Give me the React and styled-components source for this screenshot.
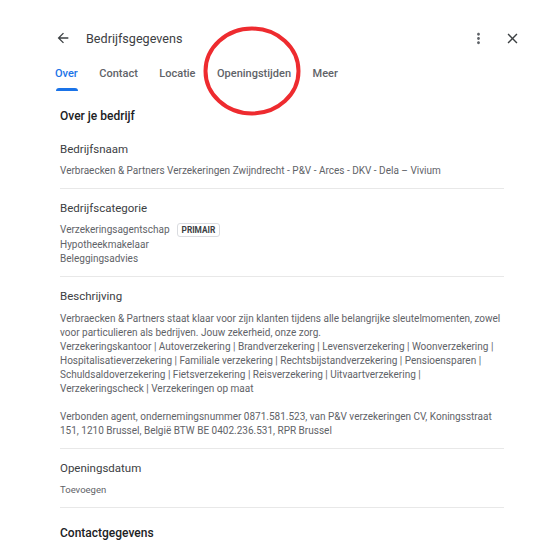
import React from 'react';
import styled, { createGlobalStyle } from 'styled-components';

const GlobalStyle = createGlobalStyle`
  html, body {
    margin: 0;
    padding: 0;
    background: #fff;
  }
  body {
    font-family: Roboto, "Noto Sans", Arial, sans-serif;
    -webkit-font-smoothing: antialiased;
  }
`;

const tabs = ['Over', 'Contact', 'Locatie', 'Openingstijden', 'Meer'];

// regels zoals ze in de kaart afbreken
const description = [
  'Verbraecken & Partners staat klaar voor zijn klanten tijdens alle belangrijke sleutelmomenten, zowel',
  'voor particulieren als bedrijven. Jouw zekerheid, onze zorg.',
  'Verzekeringskantoor | Autoverzekering | Brandverzekering | Levensverzekering | Woonverzekering |',
  'Hospitalisatieverzekering | Familiale verzekering | Rechtsbijstandverzekering | Pensioensparen |',
  'Schuldsaldoverzekering | Fietsverzekering | Reisverzekering | Uitvaartverzekering |',
  'Verzekeringscheck | Verzekeringen op maat',
  '',
  'Verbonden agent, ondernemingsnummer 0871.581.523, van P&V verzekeringen CV, Koningsstraat',
  '151, 1210 Brussel, België BTW BE 0402.236.531, RPR Brussel',
];

const Page = () => {
  return (
    <Panel>
      <GlobalStyle />
      <Header>
        <IconButton aria-label="terug">
          <svg width="16" height="16" viewBox="0 0 24 24">
            <path d="M20 11H7.83l5.59-5.59L12 4l-8 8 8 8 1.41-1.41L7.83 13H20v-2z" fill="#3c4043" />
          </svg>
        </IconButton>
        <Title>Bedrijfsgegevens</Title>
        <Spacer />
        <IconButton aria-label="meer">
          <svg width="17" height="17" viewBox="0 0 24 24">
            <path d="M12 8c1.1 0 2-.9 2-2s-.9-2-2-2-2 .9-2 2 .9 2 2 2zm0 2c-1.1 0-2 .9-2 2s.9 2 2 2 2-.9 2-2-.9-2-2-2zm0 6c-1.1 0-2 .9-2 2s.9 2 2 2 2-.9 2-2-.9-2-2-2z" fill="#5f6368" />
          </svg>
        </IconButton>
        <IconButton aria-label="sluiten" $gap>
          <svg width="17" height="17" viewBox="0 0 24 24">
            <path d="M19 6.41L17.59 5 12 10.59 6.41 5 5 6.41 10.59 12 5 17.59 6.41 19 12 13.41 17.59 19 19 17.59 13.41 12z" fill="#3c4043" />
          </svg>
        </IconButton>
      </Header>

      <TabBar>
        {tabs.map((t, i) => (
          <Tab key={t} $active={i === 0}>{t}</Tab>
        ))}
      </TabBar>

      <Content>
        <SectionTitle>Over je bedrijf</SectionTitle>

        <Block>
          <Label>Bedrijfsnaam</Label>
          <Value>Verbraecken &amp; Partners Verzekeringen Zwijndrecht - P&amp;V - Arces - DKV - Dela – Vivium</Value>
        </Block>

        <Block>
          <Label>Bedrijfscategorie</Label>
          <Lines>
            <Line>Verzekeringsagentschap<Chip>PRIMAIR</Chip></Line>
            <Line>Hypotheekmakelaar</Line>
            <Line>Beleggingsadvies</Line>
          </Lines>
        </Block>

        <Block $tall>
          <Label>Beschrijving</Label>
          <Description>
            {description.map((l, i) => (
              <DescLine key={i}>{l || '\u00a0'}</DescLine>
            ))}
          </Description>
        </Block>

        <Block>
          <Label>Openingsdatum</Label>
          <Value $small>Toevoegen</Value>
        </Block>

        <SectionTitle $last>Contactgegevens</SectionTitle>
      </Content>

      <Marker>
        <svg width="100" height="92" viewBox="0 0 100 92">
          <ellipse cx="49" cy="46" rx="46.5" ry="42.5" fill="none" stroke="#ee2b2f" strokeWidth="4" />
        </svg>
      </Marker>
    </Panel>
  );
};

export default Page;

const Panel = styled.div`
  position: relative;
  width: 546px;
  height: 557px;
  overflow: hidden;
  background: #fff;
  color: #3c4043;
`;

const Header = styled.div`
  display: flex;
  align-items: center;
  height: 24px;
  padding: 26px 23px 0 52px;
`;

const IconButton = styled.div`
  display: flex;
  align-items: center;
  justify-content: center;
  width: 22px;
  height: 22px;
  margin-left: ${p => (p.$gap ? '12px' : '0')};
`;

const Title = styled.div`
  margin-left: 12px;
  font-size: 12.6px;
  color: #3c4043;
`;

const Spacer = styled.div`
  flex: 1;
`;

const TabBar = styled.div`
  display: flex;
  gap: 21.5px;
  padding: 17px 0 0 55px;
`;

const Tab = styled.div`
  position: relative;
  padding-bottom: 10px;
  font-size: 11px;
  line-height: 14px;
  font-weight: 500;
  color: ${p => (p.$active ? '#1a73e8' : '#5f6368')};

  &::after {
    content: '';
    display: ${p => (p.$active ? 'block' : 'none')};
    position: absolute;
    left: 1px;
    right: 0;
    bottom: 0;
    height: 3px;
    border-radius: 3px 3px 0 0;
    background: #1a73e8;
  }
`;

const Marker = styled.div`
  position: absolute;
  left: 203px;
  top: 25px;
  pointer-events: none;
`;

const Content = styled.div`
  padding: 17px 42px 0 60px;
`;

const SectionTitle = styled.div`
  font-size: 12px;
  line-height: 16px;
  font-weight: 500;
  color: #202124;
  padding: ${p => (p.$last ? '17px 0 0' : '0 0 5.5px')};
`;

const Block = styled.div`
  padding: 11px 0 ${p => (p.$tall ? '10px' : '9.5px')};
  border-bottom: 1px solid #e8e8e8;
`;

const Label = styled.div`
  font-size: 11.5px;
  line-height: 17px;
  color: #3c4043;
  margin-bottom: 6.5px;
`;

const Value = styled.div`
  font-size: ${p => (p.$small ? '9.5px' : '10px')};
  line-height: 14px;
  color: #5f6368;
  white-space: nowrap;
`;

const Lines = styled.div`
  display: flex;
  flex-direction: column;
`;

const Line = styled.div`
  display: flex;
  align-items: center;
  height: 14.5px;
  font-size: 10px;
  line-height: 14.5px;
  color: #5f6368;
`;

const Chip = styled.span`
  margin-left: 7px;
  padding: 1px 4px;
  border: 1px solid #dadce0;
  border-radius: 3px;
  font-size: 8.3px;
  font-weight: 700;
  color: #3c4043;
  line-height: 10px;
`;

const Description = styled.div`
  font-size: 10px;
  line-height: 14px;
  color: #5f6368;
`;

const DescLine = styled.div`
  white-space: nowrap;
`;
